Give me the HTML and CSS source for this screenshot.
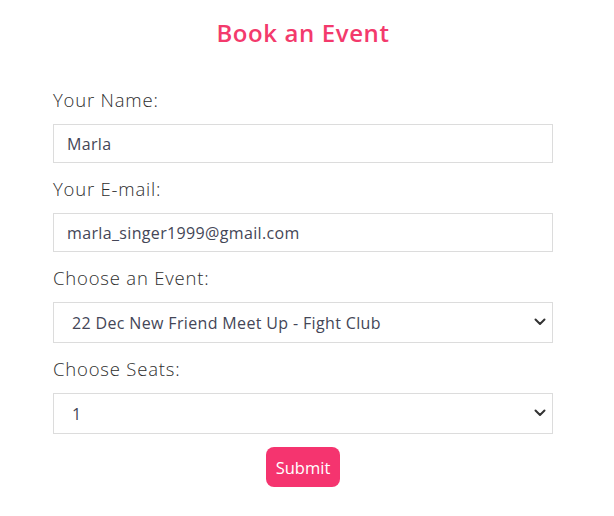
FILE: index.html
```html
<!DOCTYPE html>
<html lang="en">
<head>
<meta charset="utf-8">
<title>Book an Event</title>
<link rel="stylesheet" href="styles.css">
</head>
<body>
<div class="page">
  <h1 class="title">Book an Event</h1>
  <form class="form">
    <label class="label" for="name">Your Name:</label>
    <input class="field" id="name" type="text" value="Marla">
    <label class="label" for="email">Your E-mail:</label>
    <input class="field" id="email" type="email" value="marla_singer1999@gmail.com">
    <label class="label" for="event">Choose an Event:</label>
    <div class="select-wrap">
      <select class="field select" id="event">
        <option>22 Dec New Friend Meet Up - Fight Club</option>
      </select>
      <svg class="chev" width="12" height="8" viewBox="0 0 12 8"><path d="M1.5 1.5 L6 6 L10.5 1.5" fill="none" stroke="#333" stroke-width="2" stroke-linecap="round" stroke-linejoin="round"/></svg>
    </div>
    <label class="label" for="seats">Choose Seats:</label>
    <div class="select-wrap">
      <select class="field select" id="seats">
        <option>1</option>
      </select>
      <svg class="chev" width="12" height="8" viewBox="0 0 12 8"><path d="M1.5 1.5 L6 6 L10.5 1.5" fill="none" stroke="#333" stroke-width="2" stroke-linecap="round" stroke-linejoin="round"/></svg>
    </div>
    <div class="actions">
      <button class="submit" type="button">Submit</button>
    </div>
  </form>
</div>
</body>
</html>
```
FILE: styles.css
```css
html, body {
  margin: 0;
  padding: 0;
  background: #fff;
}
body {
  font-family: "Open Sans", "Noto Sans", sans-serif;
  color: #3a3a3a;
}
.page {
  width: 606px;
  padding-top: 17px;
}
.title {
  margin: 0;
  text-align: center;
  font-size: 24px;
  line-height: 32px;
  font-weight: 600;
  letter-spacing: 0.6px;
  color: #f33a6c;
}
.form {
  width: 500px;
  margin: 0 auto;
  padding-top: 39px;
  display: flex;
  flex-direction: column;
}
.label {
  font-size: 18.5px;
  line-height: 24px;
  font-weight: 300;
  letter-spacing: 0.8px;
  color: #2e2e2e;
  margin-bottom: 12px;
}
.field {
  box-sizing: border-box;
  width: 100%;
  height: 39px;
  border: 1px solid #dcdcdc;
  border-radius: 0;
  padding: 0 13px;
  font-family: inherit;
  font-size: 16px;
  font-weight: 400;
  letter-spacing: 0.35px;
  color: #444657;
  background: #fff;
  margin: 0 0 14px 0;
  outline: none;
}
.select-wrap {
  position: relative;
}
.select {
  appearance: none;
  -webkit-appearance: none;
  height: 41px;
  padding-left: 18px;
  display: block;
}
.chev {
  position: absolute;
  right: 7px;
  top: 16px;
}
.actions {
  display: flex;
  justify-content: center;
  margin-top: -1px;
}
.submit {
  background: #f5346f;
  color: #fff;
  border: none;
  border-radius: 8px;
  height: 40px;
  padding: 0 10px;
  font-family: inherit;
  font-size: 16.5px;
}
```
